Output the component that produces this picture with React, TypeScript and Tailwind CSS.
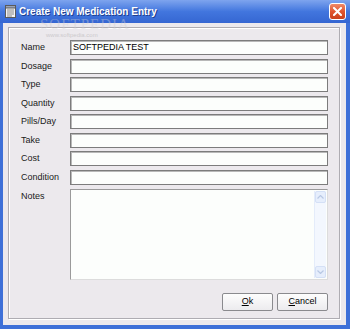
import React from 'react'

const rows: { label: string; value: string; h: string }[] = [
  { label: 'Name', value: 'SOFTPEDIA TEST', h: 'h-[19px]' },
  { label: 'Dosage', value: '', h: 'h-[18px]' },
  { label: 'Type', value: '', h: 'h-[19px]' },
  { label: 'Quantity', value: '', h: 'h-[18px]' },
  { label: 'Pills/Day', value: '', h: 'h-[19px]' },
  { label: 'Take', value: '', h: 'h-[18px]' },
  { label: 'Cost', value: '', h: 'h-[19px]' },
  { label: 'Condition', value: '', h: 'h-[19px]' },
]

function TitleIcon() {
  return (
    <svg width="11" height="13" viewBox="0 0 11 13" className="shrink-0">
      <rect x="0.5" y="0.5" width="10" height="12" fill="#f4f4f4" stroke="#5a5a5a" />
      <rect x="0.5" y="0.5" width="10" height="2.5" fill="#9aa4b8" stroke="#5a5a5a" />
      <line x1="2" y1="5" x2="9" y2="5" stroke="#8a8a8a" />
      <line x1="2" y1="7" x2="9" y2="7" stroke="#8a8a8a" />
      <line x1="2" y1="9" x2="9" y2="9" stroke="#8a8a8a" />
      <line x1="2" y1="11" x2="7" y2="11" stroke="#8a8a8a" />
    </svg>
  )
}

function CloseButton() {
  return (
    <div className="w-[17px] h-[17px] rounded-[3px] border border-white bg-gradient-to-b from-[#f08a68] via-[#e0552f] to-[#c9401c] flex items-center justify-center">
      <svg width="9" height="9" viewBox="0 0 9 9">
        <path d="M1 1 L8 8 M8 1 L1 8" stroke="white" strokeWidth="2" strokeLinecap="square" />
      </svg>
    </div>
  )
}

function Chevron({ up }: { up: boolean }) {
  return (
    <svg width="7" height="4" viewBox="0 0 7 4">
      <path d={up ? 'M0.5 3.5 L3.5 0.5 L6.5 3.5' : 'M0.5 0.5 L3.5 3.5 L6.5 0.5'} stroke="#b8c8e4" fill="none" strokeWidth="1.2" />
    </svg>
  )
}

function XpButton({ first, rest }: { first: string; rest: string }) {
  return (
    <button className="w-[51px] h-[18px] rounded-[2px] border border-[#8a8a8e] bg-gradient-to-b from-[#fdfdfd] to-[#ecebee] text-[9px] text-black flex items-center justify-center">
      <span className="underline underline-offset-1">{first}</span>
      <span>{rest}</span>
    </button>
  )
}

export default function App() {
  return (
    <div
      className="w-[350px] h-[329px] flex flex-col bg-[#3e70d8] relative overflow-hidden"
      style={{ fontFamily: '"Liberation Sans", Arial, sans-serif' }}
    >
      {/* title bar */}
      <div className="h-[23px] shrink-0 flex items-center pl-[5px] pr-[4px] bg-gradient-to-b from-[#7ea4ee] via-[#4276de] to-[#3566d2]">
        <TitleIcon />
        <span className="ml-[3px] text-white font-bold text-[10px] [text-shadow:1px_1px_0_#1f3f8f]">
          Create New Medication Entry
        </span>
        <div className="ml-auto">
          <CloseButton />
        </div>
      </div>

      {/* client area */}
      <div className="flex-1 ml-[3px] mr-[4px] mb-[4px] bg-[#ece9ed] pt-[4px] pl-[5px] pr-[6px] pb-[6px] flex">
        <div className="flex-1 border border-[#aeacb2] shadow-[inset_1px_1px_0_#ffffff,1px_1px_0_#ffffff] pt-[12px] pl-[12px] pr-[11px] flex flex-col text-[9px] text-[#1a1a1a]">
          {rows.map(r => (
            <div key={r.label} className={`${r.h} flex items-start`}>
              <div className="w-[49px] h-[15px] flex items-center">{r.label}</div>
              <div className="flex-1 h-[15px] bg-[#fcfefc] border border-[#7c7c7c] shadow-[inset_1px_1px_0_#b8b8b8] flex items-center pl-[2px] text-black text-[9px]">
                {r.value}
              </div>
            </div>
          ))}
          <div className="flex items-start">
            <div className="w-[49px] pt-[1px]">Notes</div>
            <div className="flex-1 h-[91px] bg-[#fcfefc] border-t border-l border-[#9a9a9a] border-b border-r border-b-[#dcdcdc] border-r-[#dcdcdc] flex justify-end pr-[1px] py-[1px]">
              <div className="w-[12px] h-full bg-[#f3f7fe] border-l border-[#e4ecfa] flex flex-col justify-between">
                <div className="h-[12px] bg-[#e6eefc] border border-[#d4e0f6] rounded-[2px] flex items-center justify-center">
                  <Chevron up />
                </div>
                <div className="h-[12px] bg-[#e6eefc] border border-[#d4e0f6] rounded-[2px] flex items-center justify-center">
                  <Chevron up={false} />
                </div>
              </div>
            </div>
          </div>
          <div className="mt-[13px] flex justify-end gap-[4px]">
            <XpButton first="O" rest="k" />
            <XpButton first="C" rest="ancel" />
          </div>
        </div>
      </div>

      {/* softpedia watermark over the title bar */}
      <div className="absolute left-[40px] top-[17px] pointer-events-none flex flex-col items-start opacity-40">
        <span className="text-[15px] leading-[15px] tracking-[1px] text-[#d0d0d4]" style={{ fontFamily: '"Liberation Serif", serif' }}>
          SOFTPEDIA
        </span>
        <span className="text-[6px] leading-[6px] text-[#9a9a9a] ml-[6px]">www.softpedia.com</span>
      </div>
    </div>
  )
}
